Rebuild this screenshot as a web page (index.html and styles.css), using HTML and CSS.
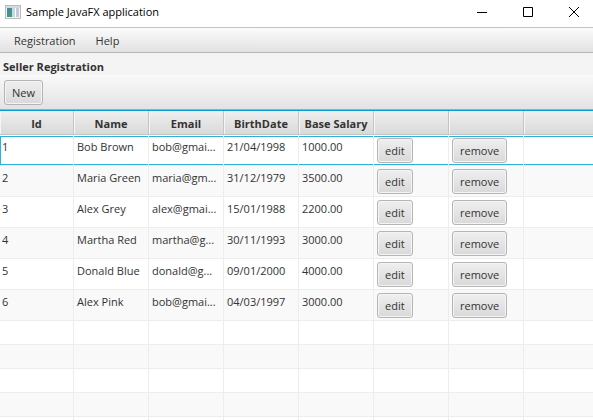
FILE: index.html
```html
<!DOCTYPE html>
<html lang="en">
<head>
<meta charset="utf-8">
<title>Sample JavaFX application</title>
<link rel="stylesheet" href="styles.css">
</head>
<body>
<header class="titlebar">
  <svg class="app-icon" viewBox="0 0 16 14" width="16" height="14" aria-hidden="true">
    <defs><linearGradient id="pane" x1="0" y1="0" x2="1" y2="1"><stop offset="0" stop-color="#4a7fb0"/><stop offset="1" stop-color="#45a077"/></linearGradient></defs>
    <rect x="0.5" y="0.5" width="15" height="13" fill="#f4f4f4" stroke="#bcbcbc"/>
    <rect x="1" y="1" width="14" height="2" fill="#d5d9dc"/>
    <rect x="2" y="3" width="5" height="9" fill="url(#pane)"/>
    <rect x="7" y="3" width="3" height="9" fill="#c5d9e2"/>
    <rect x="10" y="3" width="1" height="9" fill="#fff"/>
    <rect x="11" y="3" width="3" height="9" fill="#c3ccd5"/>
  </svg>
  <h1 class="title">Sample JavaFX application</h1>
  <div class="window-controls">
    <button type="button" class="window-button" aria-label="Minimize"><svg viewBox="0 0 10 10" width="10" height="10"><path d="M0 5.5H10" /></svg></button>
    <button type="button" class="window-button" aria-label="Maximize"><svg viewBox="0 0 10 10" width="10" height="10"><path d="M.5 .5H9.5V9.5H.5Z" /></svg></button>
    <button type="button" class="window-button" aria-label="Close"><svg viewBox="0 0 10 10" width="10" height="10"><path d="M0 0L10 10M10 0L0 10" /></svg></button>
  </div>
</header>
<nav class="menubar">
  <button type="button" class="menu">Registration</button>
  <button type="button" class="menu">Help</button>
</nav>
<main class="content">
  <h2 class="heading">Seller Registration</h2>
  <div class="toolbar"><button type="button" class="button">New</button></div>
  <table class="sellers">
    <colgroup><col class="col-id"><col class="col"><col class="col"><col class="col"><col class="col"><col class="col"><col class="col"><col></colgroup>
    <thead>
      <tr><th>Id</th><th>Name</th><th>Email</th><th>BirthDate</th><th>Base Salary</th><th></th><th></th><th></th></tr>
    </thead>
    <tbody>
      <tr class="focused"><td>1</td><td>Bob Brown</td><td>bob@gmai...</td><td>21/04/1998</td><td>1000.00</td><td><button type="button" class="button">edit</button></td><td><button type="button" class="button">remove</button></td><td></td></tr>
      <tr><td>2</td><td>Maria Green</td><td>maria@gm...</td><td>31/12/1979</td><td>3500.00</td><td><button type="button" class="button">edit</button></td><td><button type="button" class="button">remove</button></td><td></td></tr>
      <tr><td>3</td><td>Alex Grey</td><td>alex@gmai...</td><td>15/01/1988</td><td>2200.00</td><td><button type="button" class="button">edit</button></td><td><button type="button" class="button">remove</button></td><td></td></tr>
      <tr><td>4</td><td>Martha Red</td><td>martha@g...</td><td>30/11/1993</td><td>3000.00</td><td><button type="button" class="button">edit</button></td><td><button type="button" class="button">remove</button></td><td></td></tr>
      <tr><td>5</td><td>Donald Blue</td><td>donald@g...</td><td>09/01/2000</td><td>4000.00</td><td><button type="button" class="button">edit</button></td><td><button type="button" class="button">remove</button></td><td></td></tr>
      <tr><td>6</td><td>Alex Pink</td><td>bob@gmai...</td><td>04/03/1997</td><td>3000.00</td><td><button type="button" class="button">edit</button></td><td><button type="button" class="button">remove</button></td><td></td></tr>
      <tr class="empty"><td></td><td></td><td></td><td></td><td></td><td></td><td></td><td></td></tr>
      <tr class="empty"><td></td><td></td><td></td><td></td><td></td><td></td><td></td><td></td></tr>
      <tr class="empty"><td></td><td></td><td></td><td></td><td></td><td></td><td></td><td></td></tr>
      <tr class="empty"><td></td><td></td><td></td><td></td><td></td><td></td><td></td><td></td></tr>
      <tr class="empty"><td></td><td></td><td></td><td></td><td></td><td></td><td></td><td></td></tr>
    </tbody>
  </table>
</main>
</body>
</html>
```
FILE: styles.css
```css
* {
  box-sizing: border-box;
}

body {
  margin: 0;
  height: 100vh;
  overflow: hidden;
  background: #f4f4f4;
  color: #333;
  font: 11px/18px "Segoe UI", "Open Sans", sans-serif;
}

button {
  font: inherit;
  color: inherit;
}

.titlebar {
  display: flex;
  align-items: center;
  height: 28px;
  padding: 0 0 4px 5px;
  border-bottom: 1px solid #c2c2c2;
  background: #fff;
}

.title {
  flex: 1;
  margin: 0 0 0 5px;
  color: #000;
  font-size: 11px;
  font-weight: 400;
}

.window-controls {
  display: flex;
}

.window-button {
  display: flex;
  align-items: center;
  justify-content: center;
  width: 46px;
  height: 20px;
  padding: 0;
  border: 0;
  background: none;
}

.window-button:last-child {
  width: 42px;
  padding: 0 0 0 4px;
}

.window-button svg {
  fill: none;
  stroke: #000;
}

.menubar {
  display: flex;
  height: 25px;
  padding: 0 6px;
  border-bottom: 1px solid #b5b5b5;
  background: linear-gradient(#fbfbfb, #e2e2e2);
}

.menu {
  padding: 2px 8px 0;
  border: 0;
  background: none;
}

.menu + .menu {
  margin-left: 4px;
}

.heading {
  margin: 0;
  padding: 5px 3px 0;
  height: 22px;
  font-size: 11px;
  font-weight: 700;
}

.toolbar {
  display: flex;
  align-items: center;
  height: 35px;
  padding: 1px 4px 0;
  border-bottom: 1px solid #8fb3c0;
  background: linear-gradient(#f9f9f9, #e3e3e3);
}

.button {
  display: block;
  height: 25px;
  padding: 0 7px;
  border: 1px solid #b5b5b5;
  border-radius: 3px;
  background: linear-gradient(#efefef, #d9d9d9);
  box-shadow: inset 0 0 0 1px #f4f4f4;
}

.sellers {
  width: 100%;
  table-layout: fixed;
  border-collapse: separate;
  border-spacing: 0;
  border-top: 1px solid #039ed3;
  background: #fff;
}

.col-id {
  width: 74px;
}

.col {
  width: 75px;
}

.sellers th {
  height: 24px;
  padding: 2px 0 0;
  border-right: 1px solid #c4c4c4;
  border-bottom: 1px solid #c4c4c4;
  background: linear-gradient(#efefef, #d9d9d9);
  box-shadow: inset 1px 1px 0 #f6f6f6;
  font-weight: 700;
  white-space: nowrap;
}

.sellers td {
  height: 31px;
  padding: 3px 3px 0;
  border-right: 1px solid #ededed;
  border-bottom: 1px solid #ededed;
  vertical-align: top;
  white-space: nowrap;
}

.sellers td:first-child {
  padding-left: 2px;
}

.sellers tr:nth-child(even) td {
  background: #f9f9f9;
}

.sellers .focused td {
  box-shadow: inset 0 1px 0 #fff, inset 0 2px 0 #2eb0dc, inset 0 -1px 0 #2eb0dc;
}

.sellers .focused td:first-child {
  box-shadow: inset 0 1px 0 #fff, inset 1px 2px 0 #2eb0dc, inset 0 -1px 0 #2eb0dc;
}

.sellers .empty td {
  height: 24px;
  padding: 0;
}

.sellers th:last-child,
.sellers td:last-child {
  border-right: 0;
}
```
